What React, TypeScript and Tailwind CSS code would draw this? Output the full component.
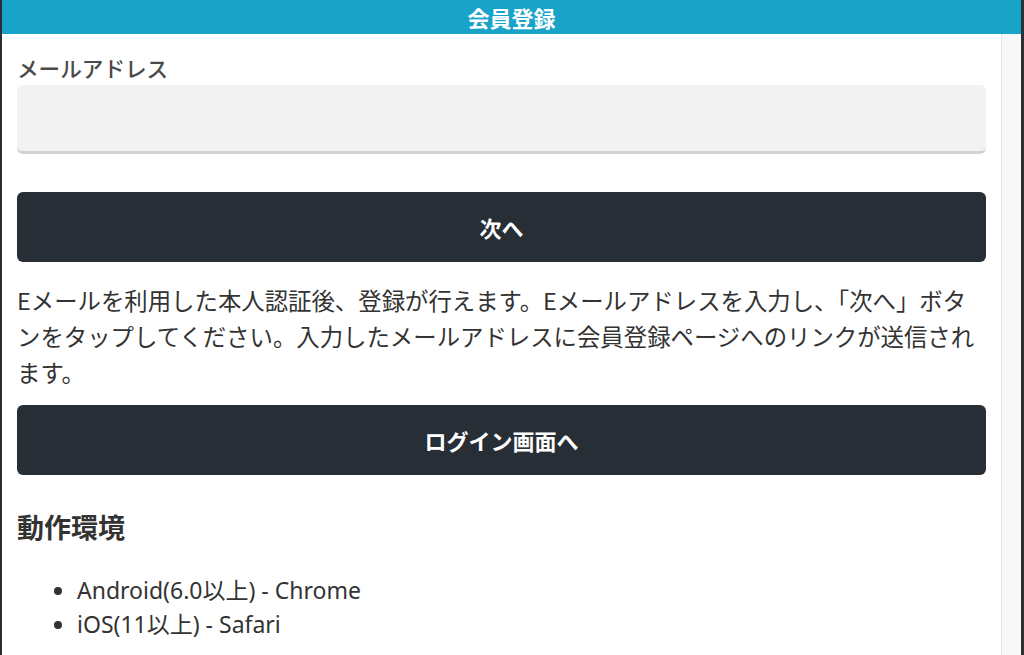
export default function App() {
  return (
    <div
      className="w-[1024px] h-[655px] overflow-hidden flex flex-col bg-white border-l-2 border-r-[3px] border-[#2a2f36] text-[#333]"
      style={{ fontFamily: '"Noto Sans CJK JP", "Noto Sans", sans-serif' }}
    >
      {/* Header */}
      <header className="h-[34px] shrink-0 bg-[#1aa3c8] flex items-center justify-center">
        <h1 className="text-[22px] font-bold text-white leading-none">会員登録</h1>
      </header>

      <div className="flex flex-1 min-h-0">
        {/* Main */}
        <main className="flex-1 px-[15px] pt-[19px]">
          <label className="block text-[21.6px] leading-[30px] font-medium text-[#4a4a4a] mb-[2px]">メールアドレス</label>
          <input
            type="email"
            className="block w-full h-[69px] rounded-md bg-[#f2f2f2] border-b-[3px] border-[#d2d2d2] outline-none px-4"
          />

          <button className="mt-[38px] w-full h-[70px] rounded-md bg-[#282e36] text-white text-[22px] font-bold">
            次へ
          </button>

          <p className="mt-[20px] text-[23.4px] leading-[36px] text-[#333]">
            Eメールを利用した本人認証後、登録が行えます。Eメールアドレスを入力し、「次へ」ボタンをタップしてください。入力したメールアドレスに会員登録ページへのリンクが送信されます。
          </p>

          <button className="mt-[15px] w-full h-[70px] rounded-md bg-[#282e36] text-white text-[22px] font-bold">
            ログイン画面へ
          </button>

          <h2 className="mt-[35px] text-[27px] leading-[33px] font-bold text-[#333]">動作環境</h2>

          <ul
            className="mt-[30px] pl-[60px] list-disc text-[23px] leading-[34px] text-[#333]"
            style={{ fontFamily: '"Noto Sans", "Noto Sans CJK JP", sans-serif' }}
          >
            <li>Android(6.0以上) - Chrome</li>
            <li>iOS(11以上) - Safari</li>
          </ul>
        </main>

        {/* Scrollbar track */}
        <div className="w-[20px] shrink-0 bg-[#f8f8f8] border-l border-[#e4e4e4]" />
      </div>
    </div>
  );
}
